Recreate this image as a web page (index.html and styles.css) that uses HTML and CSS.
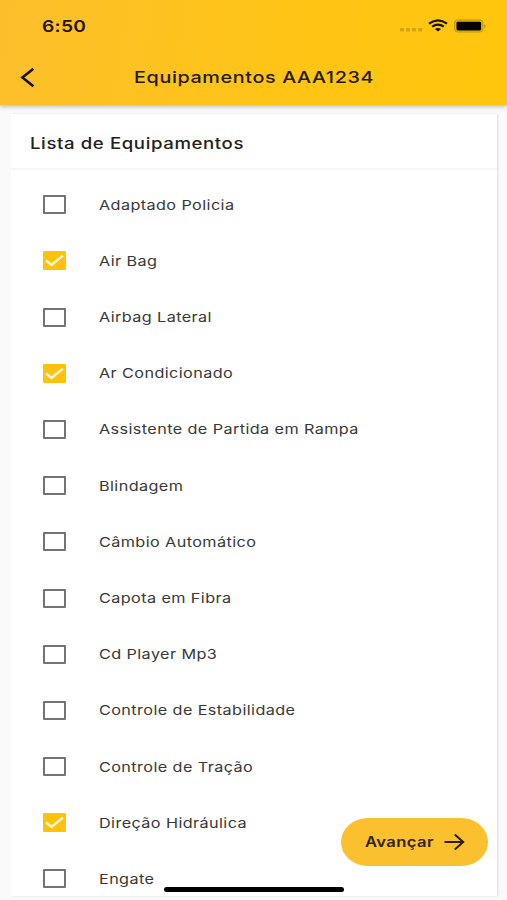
FILE: index.html
```html
<!DOCTYPE html>
<html lang="pt-BR">
<head>
<meta charset="utf-8">
<title>Equipamentos</title>
<link rel="stylesheet" href="styles.css">
</head>
<body>
<div class="screen">
  <header class="app-bar">
    <div class="status">
      <span class="time"><span class="wide">6:50</span></span>
      <svg class="status-icons" width="90" height="20" viewBox="0 0 90 20">
        <g fill="#d5a213"><rect x="2" y="12" width="4" height="3.5" rx="1"/><rect x="8" y="12" width="4" height="3.5" rx="1"/><rect x="14" y="12" width="4" height="3.5" rx="1"/><rect x="20.2" y="12" width="4" height="3.5" rx="1"/></g>
        <g fill="none" stroke="#171203" stroke-width="2.2"><path d="M31 7.6Q40 1 49 7.6"/><path d="M34.2 10.7Q40 6.4 45.8 10.7"/></g>
        <path d="M36.9 13Q40 10.9 43.1 13L40 15.6Z" fill="#171203"/>
        <rect x="56.5" y="3.9" width="28.5" height="12.2" rx="3.2" fill="#e5b009" stroke="#c79a10"/>
        <rect x="58.5" y="5.8" width="24.6" height="8.6" rx="1.4" fill="#060500"/>
        <path d="M86.4 8q2.2 2 0 4z" fill="#a27c10"/>
      </svg>
    </div>
    <div class="toolbar">
      <svg class="back" width="18" height="22" viewBox="0 0 18 22"><path d="M15.4 1.7L4.4 10.6L15.4 19.3" fill="none" stroke="#110d02" stroke-width="2.5"/></svg>
      <h1 class="title"><span class="wide">Equipamentos AAA1234</span></h1>
    </div>
  </header>
  <main class="card">
    <h2 class="card-title"><span class="wide">Lista de Equipamentos</span></h2>
    <ul class="list">
      <li class="row"><span class="box"></span><span class="wide">Adaptado Policia</span></li>
      <li class="row"><span class="box checked"><svg viewBox="0 0 22 18"><path d="M3 9L8.2 13.3L19 4.3"/></svg></span><span class="wide">Air Bag</span></li>
      <li class="row"><span class="box"></span><span class="wide">Airbag Lateral</span></li>
      <li class="row"><span class="box checked"><svg viewBox="0 0 22 18"><path d="M3 9L8.2 13.3L19 4.3"/></svg></span><span class="wide">Ar Condicionado</span></li>
      <li class="row"><span class="box"></span><span class="wide">Assistente de Partida em Rampa</span></li>
      <li class="row"><span class="box"></span><span class="wide">Blindagem</span></li>
      <li class="row"><span class="box"></span><span class="wide">Câmbio Automático</span></li>
      <li class="row"><span class="box"></span><span class="wide">Capota em Fibra</span></li>
      <li class="row"><span class="box"></span><span class="wide">Cd Player Mp3</span></li>
      <li class="row"><span class="box"></span><span class="wide">Controle de Estabilidade</span></li>
      <li class="row"><span class="box"></span><span class="wide">Controle de Tração</span></li>
      <li class="row"><span class="box checked"><svg viewBox="0 0 22 18"><path d="M3 9L8.2 13.3L19 4.3"/></svg></span><span class="wide">Direção Hidráulica</span></li>
      <li class="row"><span class="box"></span><span class="wide">Engate</span></li>
    </ul>
  </main>
  <button class="next"><span class="next-label"><span class="wide">Avançar</span></span>
    <svg width="22" height="18" viewBox="0 0 22 18"><path d="M0.5 9H19M10.8 1.6L19.2 9L10.8 16.4" fill="none" stroke="#2a1e05" stroke-width="2"/></svg>
  </button>
  <div class="home-bar"></div>
</div>
</body>
</html>
```

FILE: styles.css
```css
* { box-sizing: border-box; }
body { margin: 0; font-family: Inter, "Liberation Sans", sans-serif; background: #fafafa; }
.screen { position: relative; width: 507px; height: 900px; overflow: hidden; display: flex; flex-direction: column; }
.wide { display: inline-block; white-space: nowrap; transform: scaleX(1.2); transform-origin: left center; }

.app-bar { flex: none; height: 105px; background: linear-gradient(100deg, #fcbf2c, #ffc416 55%, #ffc60c); box-shadow: 0 1px 5px rgba(50, 60, 75, 0.42); }
.status { height: 50px; padding: 16px 19px 0 42px; display: flex; justify-content: space-between; }
.time { font-size: 16px; line-height: 20px; font-weight: 600; color: #1c1503; letter-spacing: 0.2px; }
.toolbar { height: 55px; padding-left: 18px; display: flex; align-items: center; }
.back { flex: none; }
.title { margin: 0 0 2px 98px; font-size: 16.5px; line-height: 22px; font-weight: 500; letter-spacing: 0.5px; color: #251b04; }

.card { width: 486px; height: 782px; margin: 9px 0 0 11px; background: #fff; box-shadow: 1px 0 2px rgba(0, 0, 0, 0.12); overflow: hidden; }
.card-title { margin: 0; height: 56px; padding: 5px 0 0 19px; display: flex; align-items: center; font-size: 15.5px; font-weight: 500; letter-spacing: 0.5px; color: #222; border-bottom: 2px solid #f6f6f6; }
.list { list-style: none; margin: 0; padding: 6.6px 0 0; }
.row { height: 56.2px; padding-left: 32px; display: flex; align-items: center; gap: 32px; font-size: 13.5px; letter-spacing: 0.34px; color: #383838; }
.box { flex: none; width: 23px; height: 19px; border: 2px solid #747474; border-radius: 1px; margin-right: 1px; }
.box.checked { border: 0; background: #ffc20c; }
.box svg { display: block; width: 23px; height: 19px; fill: none; stroke: #fff8e0; stroke-width: 2.3; }

.next { position: absolute; left: 341px; top: 818px; width: 147px; height: 48px; padding: 0 0 1px 24px; border: 0; border-radius: 27px / 24px; background: #fbc02d; display: flex; align-items: center; font-family: inherit; }
.next-label { width: 79px; font-size: 13.8px; font-weight: 600; letter-spacing: 0.35px; color: #2f2206; text-align: left; }
.home-bar { position: absolute; left: 164px; top: 887px; width: 180px; height: 5px; border-radius: 3px; background: #000; }
```
